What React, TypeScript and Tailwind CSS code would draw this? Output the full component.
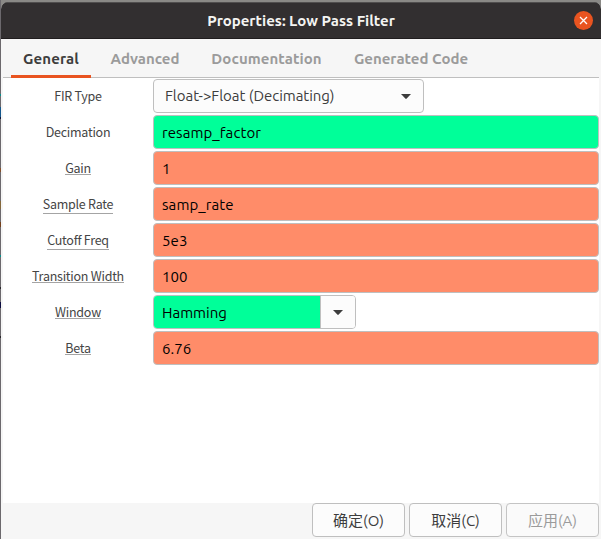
import type { ReactNode } from 'react';

const UI = "font-['Ubuntu','Noto_Sans','Noto_Sans_CJK_SC',sans-serif]";
const CJK = "font-['Noto_Sans_CJK_SC',sans-serif]";

const tabs = [
  { name: 'General', box: 'w-20 tracking-[0.1px]', active: true },
  { name: 'Advanced', box: 'ml-2 w-[92px]', active: false },
  { name: 'Documentation', box: 'ml-2 w-[135px] tracking-[0.08px]', active: false },
  { name: 'Generated Code', box: 'ml-2 w-[138px]', active: false },
];

// The sliver of desktop that shows left of the window, from top to bottom.
const desktop = [
  { size: 'h-[94px]', color: '' },
  { size: 'h-0.5', color: 'bg-[#088f8c]' },
  { size: 'h-[11px]', color: '' },
  { size: 'h-2.5', color: 'bg-[#14578c]' },
  { size: 'h-0.5', color: 'bg-[#10183c]' },
  { size: 'h-[49px]', color: '' },
  { size: 'h-1', color: 'bg-[#84502c]' },
  { size: 'h-[29px]', color: '' },
  { size: 'h-2', color: 'bg-[#85683c]' },
  { size: 'h-[13px]', color: '' },
  { size: 'h-[5px]', color: 'bg-[#74401c]' },
  { size: 'h-[28px]', color: '' },
  { size: 'h-0.5', color: 'bg-[#088f8c]' },
  { size: 'h-[30px]', color: '' },
  { size: 'h-0.5', color: 'bg-[#2a282c]' },
  { size: 'h-[13px]', color: '' },
  { size: 'h-[6px]', color: 'bg-[#0c0c40]' },
  { size: 'h-[28px]', color: '' },
  { size: 'h-0.5', color: 'bg-[#2a282c]' },
];

function Caret() {
  return (
    <svg width="10" height="5" viewBox="0 0 10 5" className="block fill-[#3d3d3d]">
      <path d="M0 0H10L5.7 4.6Q5 5.2 4.3 4.6Z" />
    </svg>
  );
}

function Row({ label, line, children }: { label: string; line?: string; children: ReactNode }) {
  return (
    <div className="flex h-[34px] items-center">
      <div className="flex w-[150px] shrink-0 justify-center">
        <span className={`relative block whitespace-nowrap text-[12.5px] leading-[18px] tracking-[-0.25px] text-[#454545] ${CJK}`}>
          {label}
          {line && <span className={`absolute inset-x-0 h-px bg-[#a4a4a4] ${line}`} />}
        </span>
      </div>
      {children}
    </div>
  );
}

function Entry({ value, color }: { value: string; color: string }) {
  return (
    <div className={`flex h-[34px] flex-1 items-center rounded border border-[#bfbfbf] pt-0.5 pl-2 text-[15px] tracking-[0.08px] text-black ${color}`}>
      {value}
    </div>
  );
}

export default function App() {
  return (
    <div className={`flex h-[539px] w-[601px] overflow-hidden bg-[#8a8986] ${UI}`}>
      <div className="w-px shrink-0 bg-[#6c696d]">
        {desktop.map((d, i) => (
          <div key={i} className={`${d.size} ${d.color}`} />
        ))}
      </div>
      <div className="mt-0.5 flex h-[537px] flex-1 flex-col overflow-hidden rounded-t-[7px] bg-[#f6f6f6]">
        <header className="grid h-[37px] shrink-0 grid-cols-[1fr_auto_1fr] items-center border-t border-b border-t-[#504e4e] border-b-[#201d1e] bg-[#322f30]">
          <span />
          <h1 className="pt-0.5 text-[15px] font-bold whitespace-nowrap text-[#f4f4f2]">Properties: Low Pass Filter</h1>
          <button className="mr-2 flex size-[19px] items-center justify-center justify-self-end rounded-full bg-[#e95420]">
            <svg width="9" height="9" viewBox="0 0 9 9" className="stroke-white" strokeWidth="1.3">
              <path d="M1 1L8 8M8 1L1 8" />
            </svg>
          </button>
        </header>

        <nav className="mx-0.5 flex h-[39px] shrink-0 border-b border-[#bfbfbf] pl-2 text-[15px] font-bold">
          {tabs.map((t) => (
            <div
              key={t.name}
              className={`-mb-px flex items-center justify-center whitespace-nowrap ${t.box} ${
                t.active ? 'border-b-[3px] border-[#e95420] pt-[5px] text-[#3d3d3d]' : 'pt-0.5 text-[#9b9b9b]'
              }`}
            >
              {t.name}
            </div>
          ))}
        </nav>

        <main className="mr-0.5 ml-0.5 flex h-[425px] shrink-0 flex-col gap-0.5 bg-white pt-px">
          <Row label="FIR Type">
            <div className="flex h-[34px] w-[271px] items-center justify-between rounded border border-[#bfbfbf] bg-[#fcfcfc] pr-3 pl-[11px] text-[15px] text-[#3d3d3d]">
              <span className="tracking-[-0.04px] whitespace-nowrap">Float-&gt;Float (Decimating)</span>
              <Caret />
            </div>
          </Row>
          <Row label="Decimation">
            <Entry value="resamp_factor" color="bg-[#00ff99]" />
          </Row>
          <Row label="Gain" line="bottom-[2px]">
            <Entry value="1" color="bg-[#ff8c69]" />
          </Row>
          <Row label="Sample Rate" line="bottom-[-1px]">
            <Entry value="samp_rate" color="bg-[#ff8c69]" />
          </Row>
          <Row label="Cutoff Freq" line="bottom-[-1px]">
            <Entry value="5e3" color="bg-[#ff8c69]" />
          </Row>
          <Row label="Transition Width" line="bottom-[2px]">
            <Entry value="100" color="bg-[#ff8c69]" />
          </Row>
          <Row label="Window" line="bottom-[2px]">
            <div className="flex h-[34px] w-[203px] overflow-hidden rounded border border-[#bfbfbf] text-[15px] text-black">
              <div className="flex w-[166px] items-center bg-[#00ff99] pt-0.5 pl-2">Hamming</div>
              <div className="flex flex-1 items-center justify-center border-l border-[#bfbfbf] bg-[#fcfcfc]">
                <Caret />
              </div>
            </div>
          </Row>
          <Row label="Beta" line="bottom-[2px]">
            <Entry value="6.76" color="bg-[#ff8c69]" />
          </Row>
        </main>

        <footer className="flex justify-end gap-1 pr-0.5 text-[15px] text-[#3d3d3d]">
          <button className="h-[34px] w-[93px] rounded border border-[#bfbfbf] bg-[#fcfcfc] pt-0.5">确定(O)</button>
          <button className="h-[34px] w-[93px] rounded border border-[#bfbfbf] bg-[#fcfcfc] pt-0.5">取消(C)</button>
          <button className="h-[34px] w-[93px] rounded border border-[#c4c4c4] bg-[#fafafa] pt-0.5 text-[#9b9b9b]">应用(A)</button>
        </footer>
      </div>
    </div>
  );
}
